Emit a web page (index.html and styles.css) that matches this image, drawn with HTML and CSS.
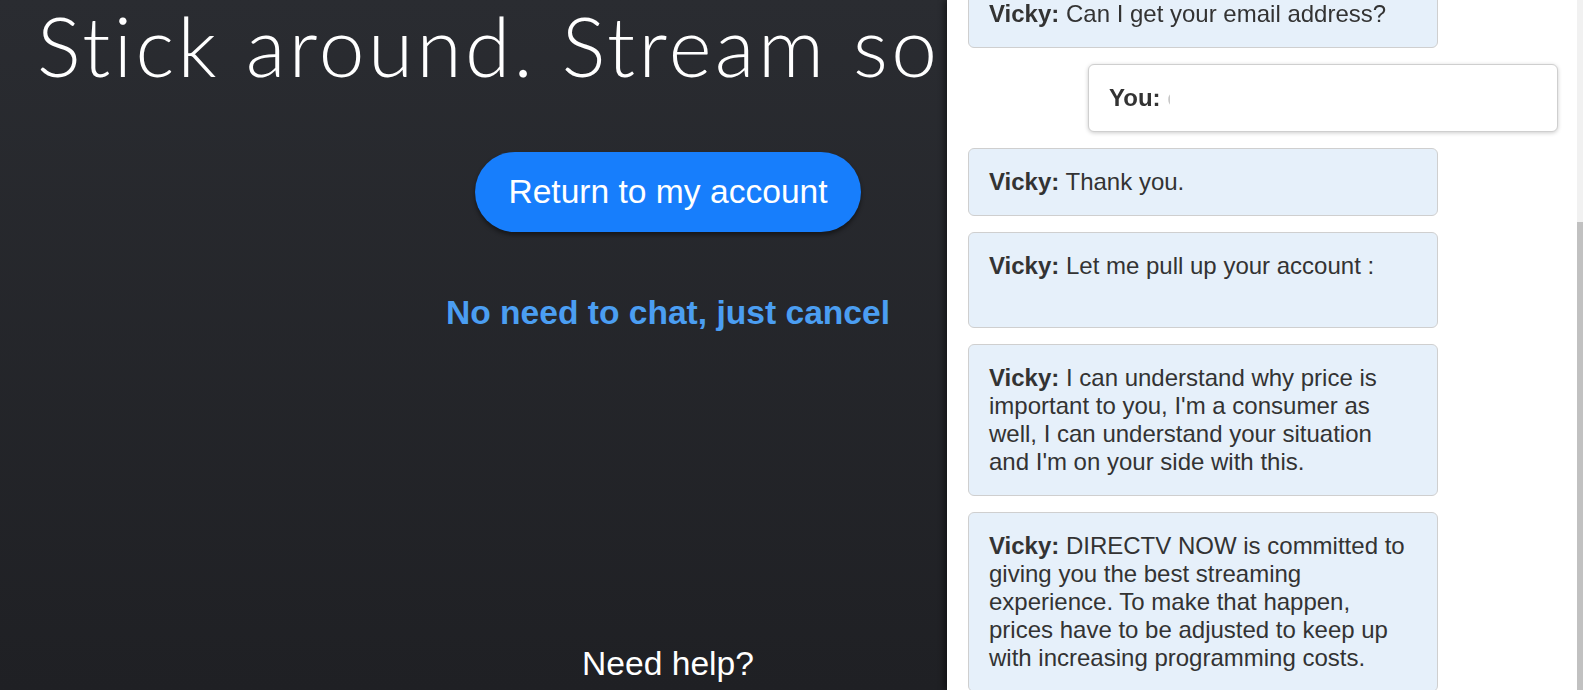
FILE: index.html
```html
<!DOCTYPE html>
<html lang="en">
<head>
  <meta charset="UTF-8" />
  <meta name="viewport" content="width=device-width, initial-scale=1.0">
  <title>Cancel - DIRECTV NOW</title>
  <link rel="stylesheet" href="styles.css">
</head>
<body>

  <!-- Pagina de retencion -->
  <main class="page">
    <h1 class="headline">Stick around. Stream some more.</h1>
    <a href="#" class="btn-return">Return to my account</a>
    <a href="#" class="cancel-link">No need to chat, just cancel</a>
    <p class="help">Need help?</p>
  </main>

  <!-- Panel de chat -->
  <aside class="chat">
    <div class="chat-log">
      <div class="msg agent"><b>Vicky:</b> Can I get your email address?</div>
      <div class="msg user"><b>You:</b> <span class="hidden-mail">c</span></div>
      <div class="msg agent"><b>Vicky:</b> Thank you.</div>
      <div class="msg agent"><b>Vicky:</b> Let me pull up your account :<br>&nbsp;</div>
      <div class="msg agent"><b>Vicky:</b> I can understand why price is important to you, I'm a consumer as well, I can understand your situation and I'm on your side with this.</div>
      <div class="msg agent"><b>Vicky:</b> DIRECTV NOW is committed to giving you the best streaming experience. To make that happen, prices have to be adjusted to keep up with increasing programming costs.</div>
    </div>
    <div class="chat-scroll"><div class="chat-thumb"></div></div>
  </aside>

</body>
</html>
```

FILE: styles.css
```css
:root {
  --azul: #177efc;
  --enlace: #4b9ef2;
  --blanco: #ffffff;
  --texto: #333333;
}
* { box-sizing: border-box; }
body {
  margin: 0;
  height: 690px;
  overflow: hidden;
  font-family: 'Liberation Sans', Arial, sans-serif;
  background: linear-gradient(180deg, #2a2c31, #1f2024);
  color: var(--blanco);
}
.page {
  width: 1336px;
  display: flex;
  flex-direction: column;
  align-items: center;
  text-align: center;
}
.headline {
  margin: 4px 0 0;
  font-family: 'Lato', 'Liberation Sans', sans-serif;
  font-weight: 300;
  font-size: 82px;
  line-height: 82px;
  letter-spacing: 3.4px;
  font-variant-ligatures: none;
  white-space: nowrap;
}
.btn-return {
  display: inline-block;
  margin-top: 66px;
  height: 80px;
  line-height: 80px;
  padding: 0 33px;
  border-radius: 40px;
  background: var(--azul);
  color: var(--blanco);
  font-size: 33.6px;
  text-decoration: none;
  box-shadow: 0 3px 4px rgba(0,0,0,0.45);
}
.cancel-link {
  margin-top: 61px;
  line-height: 40px;
  font-size: 33.6px;
  font-weight: bold;
  color: var(--enlace);
  text-decoration: none;
}
.help {
  margin: 311px 0 0;
  line-height: 40px;
  font-size: 33.6px;
}
.chat {
  position: fixed;
  top: 0;
  right: 0;
  bottom: 0;
  width: 636px;
  display: flex;
  background: var(--blanco);
  box-shadow: -3px 0 6px rgba(0,0,0,0.45);
}
.chat-log {
  flex: 1;
  display: flex;
  flex-direction: column;
  gap: 16px;
  margin-top: -20px;
  padding: 0 19px 0 21px;
}
.msg {
  width: 470px;
  padding: 19px 20px;
  border: 1px solid #cfcfcf;
  border-radius: 6px;
  font-size: 24px;
  line-height: 28px;
  color: var(--texto);
}
.agent {
  align-self: flex-start;
  background: #e6f0fa;
}
.user {
  align-self: flex-end;
  background: var(--blanco);
  box-shadow: 0 1px 4px rgba(0,0,0,0.2);
}
.hidden-mail {
  display: inline-block;
  width: 3px;
  overflow: hidden;
  vertical-align: bottom;
  color: #c8c8c8;
}
.chat-scroll {
  width: 6px;
  background: #f1f1f1;
}
.chat-thumb {
  margin-top: 222px;
  height: 468px;
  background: #c1c1c1;
}
```
